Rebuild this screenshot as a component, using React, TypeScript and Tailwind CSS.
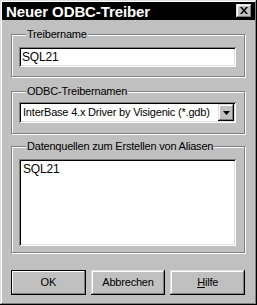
import React from 'react';

const raised =
   'shadow-[inset_-1px_-1px_0_#000,inset_1px_1px_0_#dfdfdf,inset_-2px_-2px_0_#808080,inset_2px_2px_0_#fff]';
const sunken =
   'shadow-[inset_1px_1px_0_#808080,inset_-1px_-1px_0_#fff,inset_2px_2px_0_#000,inset_-2px_-2px_0_#dfdfdf]';

const Group = ({ label, className, children }: { label: string; className: string; children: React.ReactNode }) => (
   <fieldset
      className={`border border-[#808080] shadow-[inset_1px_1px_0_#fff,1px_1px_0_#fff] pl-[7px] pr-[8px] ${className}`}
   >
      <legend className="ml-[7px] px-[1px] leading-[14px] h-[14px] whitespace-nowrap bg-[#c0c0c0]">{label}</legend>
      {children}
   </fieldset>
);

const App = () => {
   return (
      <div
         className={`w-[257px] h-[305px] bg-[#c0c0c0] p-[2px] flex flex-col text-[11px] tracking-[-0.2px] text-black font-['Liberation_Sans',sans-serif] ${raised}`}
      >
         <div className="h-[18px] bg-black flex items-center justify-between pl-[4px] pr-[3px]">
            <span className="text-white font-bold text-[15px] tracking-[-0.1px] leading-none">Neuer ODBC-Treiber</span>
            <button className={`w-[16px] h-[14px] bg-[#c0c0c0] flex items-center justify-center ${raised}`}>
               <svg width="8" height="7" viewBox="0 0 8 7" className="mb-[1px]">
                  <path d="M0 0h2l2 2.5L6 0h2L5 3.5 8 7H6L4 4.5 2 7H0l3-3.5z" fill="#000" />
               </svg>
            </button>
         </div>

         <div className="pl-[9px] pr-[10px] flex flex-col">
            <Group label="Treibername" className="mt-[7px] pt-[6px] pb-[9px]">
               <div className={`h-[20px] bg-white px-[3px] flex items-center text-[12px] ${sunken}`}>SQL21</div>
            </Group>

            <Group label="ODBC-Treibernamen" className="mt-[7px] pt-[4px] pb-[10px]">
               <div className={`h-[21px] bg-white p-[2px] flex items-stretch ${sunken}`}>
                  <span className="flex-1 pl-[2px] flex items-center whitespace-nowrap overflow-hidden">
                     InterBase 4.x Driver by Visigenic (*.gdb)
                  </span>
                  <span className={`w-[16px] bg-[#c0c0c0] flex items-center justify-center ${raised}`}>
                     <svg width="7" height="4" viewBox="0 0 7 4">
                        <path d="M0 0h7L3.5 4z" fill="#000" />
                     </svg>
                  </span>
               </div>
            </Group>

            <Group label="Datenquellen zum Erstellen von Aliasen" className="mt-[5px] pt-[6px] pb-[6px]">
               <div className={`h-[87px] bg-white px-[4px] pt-[3px] leading-[14px] text-[12px] ${sunken}`}>SQL21</div>
            </Group>

            <div className="mt-[17px] flex gap-[5px]">
               <button className="w-[75px] h-[25px] border border-black bg-[#c0c0c0]">
                  <span className="w-full h-full flex items-center justify-center shadow-[inset_-1px_-1px_0_#808080,inset_1px_1px_0_#fff]">
                     OK
                  </span>
               </button>
               <button className={`w-[75px] h-[25px] bg-[#c0c0c0] flex items-center justify-center ${raised}`}>
                  Abbrechen
               </button>
               <button className={`w-[75px] h-[25px] bg-[#c0c0c0] flex items-center justify-center ${raised}`}>
                  <span>
                     <u>H</u>ilfe
                  </span>
               </button>
            </div>
         </div>
      </div>
   );
};

export default App;
